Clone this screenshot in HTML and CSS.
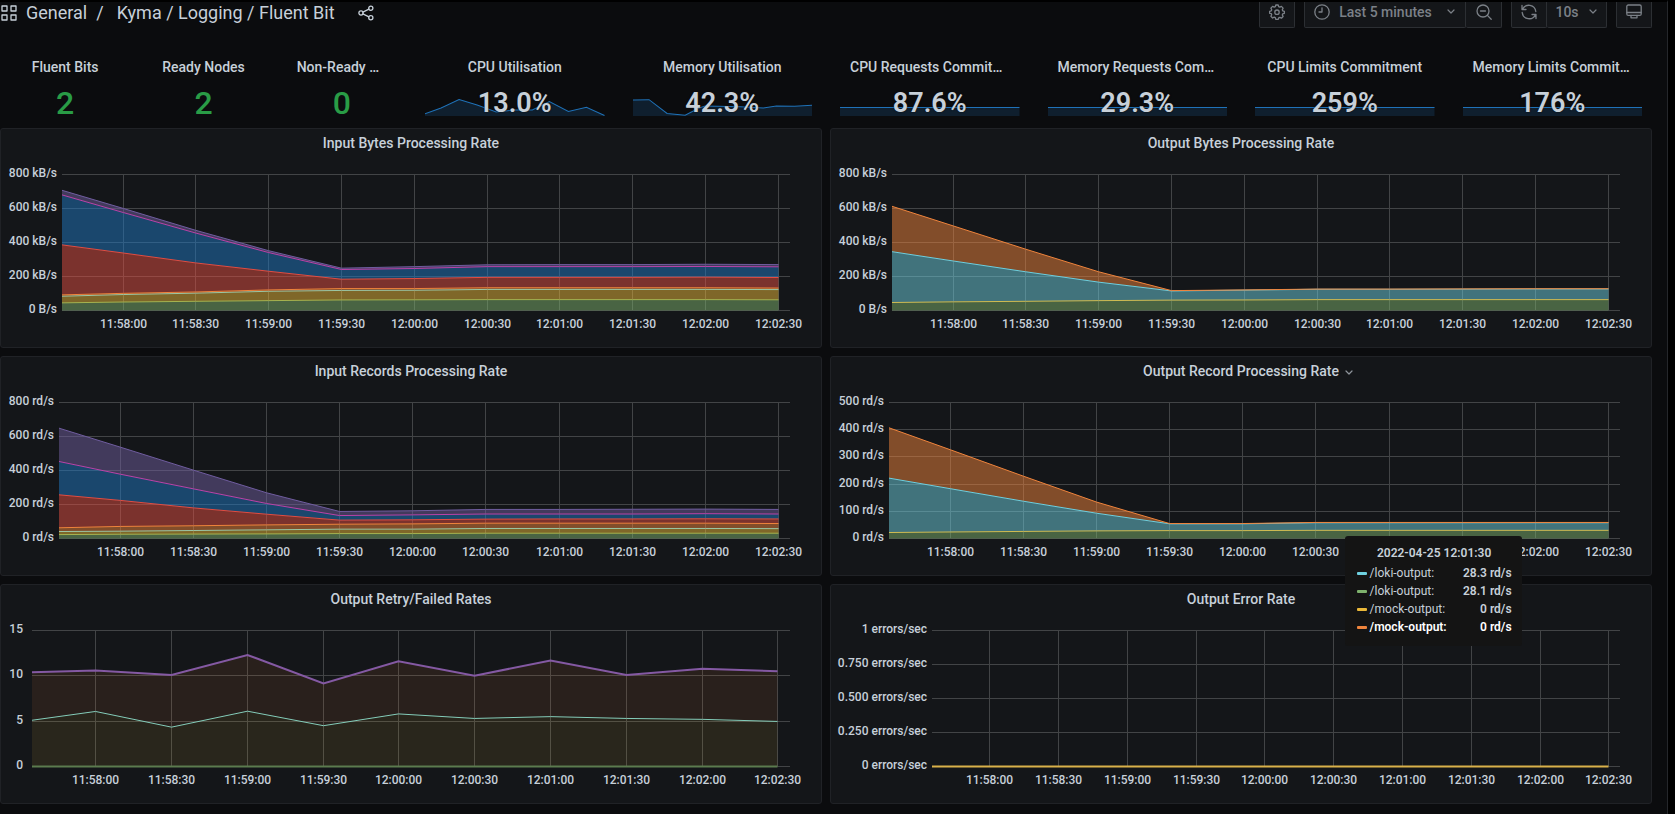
FILE: index.html
```html
<!DOCTYPE html>
<html lang="en">
<head>
<meta charset="utf-8">
<title>Kyma / Logging / Fluent Bit</title>
<link rel="stylesheet" href="styles.css">
</head>
<body>
<div class="app">
  <header class="topbar">
    <nav class="crumbs" aria-label="Breadcrumb">
      <svg class="icon" viewBox="0 0 16 16" aria-hidden="true"><path d="M1 1h5v5H1zM10 1h5v5h-5zM1 10h5v5H1zM10 10h5v5h-5z"/></svg>
      <a class="folder" href="#general">General</a>
      <span class="slash">/</span>
      <a class="board" href="#board">Kyma / Logging / Fluent Bit</a>
      <button class="share" type="button" aria-label="Share dashboard"><svg class="icon" viewBox="0 0 16 16" aria-hidden="true"><circle cx="3" cy="8" r="2.1"/><circle cx="12.8" cy="3.2" r="2.1"/><circle cx="12.8" cy="12.8" r="2.1"/><path d="M4.9 7.1l6-3M4.9 8.9l6 3"/></svg></button>
    </nav>
    <div class="tools">
      <button class="tool" type="button" aria-label="Dashboard settings"><svg class="icon" viewBox="0 0 16 16" aria-hidden="true"><path d="M6.8 1h2.4l.5 1.7 1.1.5 1.6-.8 1.7 1.7-.8 1.6.4 1.1 1.7.5v2l-1.7.5-.4 1.1.8 1.6-1.7 1.7-1.6-.8-1.1.5L9.200 15.400H6.800l-.5-1.700-1.100-.5-1.600.8-1.700-1.700.8-1.600-.4-1.100L.6 9.300v-2l1.700-.5.4-1.100-.8-1.600 1.700-1.700 1.600.8 1.100-.5z"/><circle cx="8" cy="8.200" r="2.200"/></svg></button>
      <div class="group">
        <button class="tool range" type="button"><svg class="icon" viewBox="0 0 16 16" aria-hidden="true"><circle cx="8" cy="8" r="7.200"/><path d="M8 3.800V8H5"/></svg><span>Last 5 minutes</span><svg class="caret" viewBox="0 0 10 6" aria-hidden="true"><path d="M2 1l3 3 3-3"/></svg></button>
        <button class="tool" type="button" aria-label="Zoom out"><svg class="icon" viewBox="0 0 16 16" aria-hidden="true"><circle cx="7" cy="7" r="6"/><path d="M11.400 11.400l3.800 3.800M4.500 7h5"/></svg></button>
      </div>
      <div class="group">
        <button class="tool" type="button" aria-label="Refresh"><svg class="icon" viewBox="0 0 16 16" aria-hidden="true"><path d="M1 1.500v4h4M1.500 5.300A7 7 0 0 1 14.800 7.500M15 14.500v-4h-4M14.500 10.700A7 7 0 0 1 1.200 8.500"/></svg></button>
        <button class="tool interval" type="button"><span>10s</span><svg class="caret" viewBox="0 0 10 6" aria-hidden="true"><path d="M2 1l3 3 3-3"/></svg></button>
      </div>
      <button class="tool" type="button" aria-label="Cycle view mode"><svg class="icon" viewBox="0 0 16 16" aria-hidden="true"><rect x=".8" y="1" width="14.400" height="10.400" rx="1.500"/><path d="M1 8.500h14M5 11.500v2.300h6v-2.300"/></svg></button>
    </div>
  </header>

  <main class="dashboard">
    <section class="stat"><h2 class="title">Fluent Bits</h2><div class="body"><span class="count">2</span></div></section>
    <section class="stat"><h2 class="title">Ready Nodes</h2><div class="body"><span class="count">2</span></div></section>
    <section class="stat"><h2 class="title">Non-Ready Nodes</h2><div class="body"><span class="count">0</span></div></section>

    <section class="stat wide"><h2 class="title">CPU Utilisation</h2><div class="body">
      <svg class="spark" viewBox="0 0 179 17" preserveAspectRatio="none" aria-hidden="true"><path class="area" d="M0 14.700L16 9 34 .5 52 6 71 13 90 11h17l17-8.500 19 10L161 8.300l18 8.200V17H0z"/><path class="line" d="M0 14.700L16 9 34 .5 52 6 71 13 90 11h17l17-8.500 19 10L161 8.300l18 8.200"/></svg>
      <span class="value">13.0%</span></div></section>
    <section class="stat wide"><h2 class="title">Memory Utilisation</h2><div class="body">
      <svg class="spark" viewBox="0 0 179 17" preserveAspectRatio="none" aria-hidden="true"><path class="area" d="M0 1L16 .7 34 14.500l18 1.800L66 9l6-2 35 .7L130 9l13-2 18 .2 18-.9V17H0z"/><path class="line" d="M0 1L16 .7 34 14.500l18 1.800L66 9l6-2 35 .7L130 9l13-2 18 .2 18-.9"/></svg>
      <span class="value">42.3%</span></div></section>
    <section class="stat wide"><h2 class="title">CPU Requests Commitment</h2><div class="body">
      <svg class="spark" viewBox="0 0 179 17" preserveAspectRatio="none" aria-hidden="true"><path class="area" d="M0 8.500h179V17H0z"/><path class="line" d="M0 8.500h179"/></svg>
      <span class="value">87.6%</span></div></section>
    <section class="stat wide"><h2 class="title">Memory Requests Commitment</h2><div class="body">
      <svg class="spark" viewBox="0 0 179 17" preserveAspectRatio="none" aria-hidden="true"><path class="area" d="M0 8.500h179V17H0z"/><path class="line" d="M0 8.500h179"/></svg>
      <span class="value">29.3%</span></div></section>
    <section class="stat wide"><h2 class="title">CPU Limits Commitment</h2><div class="body">
      <svg class="spark" viewBox="0 0 179 17" preserveAspectRatio="none" aria-hidden="true"><path class="area" d="M0 8.500h179V17H0z"/><path class="line" d="M0 8.500h179"/></svg>
      <span class="value">259%</span></div></section>
    <section class="stat wide"><h2 class="title">Memory Limits Commitment</h2><div class="body">
      <svg class="spark" viewBox="0 0 179 17" preserveAspectRatio="none" aria-hidden="true"><path class="area" d="M0 8.500h179V17H0z"/><path class="line" d="M0 8.500h179"/></svg>
      <span class="value">176%</span></div></section>

    <section class="panel"><h2 class="title">Input Bytes Processing Rate</h2><svg class="chart" id="input-bytes"></svg></section>
    <section class="panel"><h2 class="title">Output Bytes Processing Rate</h2><svg class="chart" id="output-bytes"></svg></section>
    <section class="panel"><h2 class="title">Input Records Processing Rate</h2><svg class="chart" id="input-records"></svg></section>
    <section class="panel">
      <h2 class="title"><span class="hovered">Output Record Processing Rate<svg class="caret" viewBox="0 0 10 6" aria-hidden="true"><path d="M2 1l3 3 3-3"/></svg></span></h2>
      <svg class="chart" id="output-records"></svg>
      <div class="tooltip" role="tooltip">
        <div class="time">2022-04-25 12:01:30</div>
        <div class="row"><i class="key teal"></i><span>/loki-output:</span><b>28.3 rd/s</b></div>
        <div class="row"><i class="key green"></i><span>/loki-output:</span><b>28.1 rd/s</b></div>
        <div class="row"><i class="key yellow"></i><span>/mock-output:</span><b>0 rd/s</b></div>
        <div class="row active"><i class="key orange"></i><span>/mock-output:</span><b>0 rd/s</b></div>
      </div>
    </section>
    <section class="panel"><h2 class="title">Output Retry/Failed Rates</h2><svg class="chart" id="output-retry"></svg></section>
    <section class="panel"><h2 class="title">Output Error Rate</h2><svg class="chart" id="output-error"></svg></section>
  </main>
</div>
<script src="charts.js"></script>
</body>
</html>
```
FILE: styles.css
```css
* { box-sizing: border-box; }

body {
  margin: 0;
  background: #000;
  color: #c7d0d9;
  font: 500 14px/20px Roboto, "Liberation Sans", sans-serif;
}

.app {
  min-height: 100vh;
  margin-right: 7px;
  padding-right: 15px;
  border-top: 2px solid #000;
  border-right: 1px solid #25272b;
  background: #0b0c0e;
}

button {
  padding: 0;
  border: 0;
  background: none;
  color: inherit;
  font: inherit;
}

a { color: inherit; text-decoration: none; }

.icon {
  display: block;
  width: 16px;
  height: 16px;
  fill: none;
  stroke: currentColor;
  stroke-width: 1.3;
  stroke-linejoin: round;
  stroke-linecap: round;
}

.caret {
  width: 10px;
  height: 6px;
  fill: none;
  stroke: currentColor;
  stroke-width: 1.2;
  stroke-linecap: round;
  stroke-linejoin: round;
}

/* Top bar */
.topbar {
  display: flex;
  justify-content: space-between;
  height: 26px;
}

.crumbs {
  display: flex;
  align-items: center;
  height: 22px;
  padding-left: 1px;
  font-size: 18px;
  font-weight: 400;
}

.folder { margin-left: 9px; }
.slash { margin: 0 13px 0 9px; }
.share { margin-left: 23px; }

.tools {
  display: flex;
  gap: 9px;
  color: #7b8087;
}

.group { display: flex; }
.group .tool + .tool { border-left: 0; }

.tool {
  display: flex;
  align-items: center;
  justify-content: center;
  gap: 9px;
  width: 36px;
  height: 26px;
  padding-bottom: 5px;
  border: 1px solid #2c2f33;
  border-top: 0;
  border-radius: 0 0 2px 2px;
  background: #141619;
}

.range { width: 162px; }
.range .caret { margin-left: 5px; }
.interval { width: 60px; }

/* Dashboard grid */
.dashboard {
  display: grid;
  grid-template-columns: repeat(24, minmax(0, 1fr));
  gap: 8px;
  padding: 24px 0 10px;
}

.title {
  height: 30px;
  margin: 0;
  padding: 4px 20px 0;
  font-size: 14px;
  font-weight: 500;
  line-height: 20px;
  text-align: center;
  white-space: nowrap;
}

.stat { grid-column: span 2; }
.stat.wide { grid-column: span 3; }
.stat .title {
  padding-top: 5px;
  overflow: hidden;
  text-overflow: ellipsis;
}

.body {
  position: relative;
  display: flex;
  align-items: center;
  justify-content: center;
  height: 38px;
}

.count {
  padding-top: 3px;
  color: #299c46;
  font-size: 32px;
  line-height: 38px;
}

.value {
  position: relative;
  padding-top: 3px;
  font-size: 27px;
  font-weight: 600;
  line-height: 38px;
  text-shadow: 0 0 2px #0b0c0e;
}

.spark {
  position: absolute;
  right: 10px;
  bottom: 4px;
  left: 10px;
  width: calc(100% - 20px);
  height: 17px;
}

.area { fill: #0f1f2e; }
.line { fill: none; stroke: #1f72b8; stroke-width: 1; }

.panel {
  position: relative;
  grid-column: span 12;
  border: 1px solid #202226;
  border-radius: 3px;
  background: #141619;
}

.hovered { position: relative; }
.hovered .caret {
  position: absolute;
  top: 7px;
  left: calc(100% + 5px);
  color: #8e949b;
}

/* Charts */
.chart {
  display: block;
  width: 100%;
  height: 188px;
}

.grid-line { stroke: #424446; stroke-width: 1; }
.chart text { fill: #c7d0d9; font-size: 12px; font-weight: 500; }
.y-label { text-anchor: end; }
.x-label { text-anchor: middle; }
.series { fill: none; stroke-width: 1; }

/* Tooltip */
.tooltip {
  position: absolute;
  z-index: 1;
  top: 179px;
  left: calc(63% - 3px);
  width: 177px;
  padding: 7px 10px 10px 12px;
  border-radius: 3px;
  background: #141414;
  font-size: 12px;
  font-weight: 400;
  line-height: 18px;
}

.time {
  margin-bottom: 1px;
  font-weight: 600;
  line-height: 20px;
  text-align: center;
}

.row { display: flex; align-items: center; gap: 3px; }
.row b { margin-left: auto; font-weight: 600; }
.active { color: #fff; font-weight: 600; }
.key { width: 10px; height: 3px; border-radius: 1px; }
.teal { background: #6ed0e0; }
.green { background: #7eb26d; }
.yellow { background: #eab839; }
.orange { background: #ef843c; }
```
FILE: charts.js
```js
const TIMES = ["11:58:00", "11:58:30", "11:59:00", "11:59:30", "12:00:00",
  "12:00:30", "12:01:00", "12:01:30", "12:02:00", "12:02:30"];
const FIRST_TICK = 0.084;
const TICK_STEP = 0.1;
const TOP = 15;
const HEIGHT = 136;
const RIGHT = 31;

const C = {
  green: "#7EB26D", yellow: "#EAB839", teal: "#6ED0E0", orange: "#EF843C",
  red: "#E24D42", blue: "#1F78C1", magenta: "#BA43A9", violet: "#705DA0",
  lime: "#A6B350", mint: "#9CC7A4", purple: "#8459A3"
};

// Each band is stacked: its own top edge, the stroke on it, and the fill below.
const CHARTS = {
  "input-bytes": {
    left: 61, max: 800, labels: ["0 B/s", "200 kB/s", "400 kB/s", "600 kB/s", "800 kB/s"],
    bands: [
      { line: C.lime, fill: C.green, data: [45, 50, 54, 58, 62, 63, 64, 64, 64, 64, 63] },
      { line: C.mint, fill: C.yellow, data: [84, 94, 102, 113, 118, 119, 124, 124, 124, 124, 123] },
      { line: C.orange, fill: C.orange, data: [92, 101, 109, 121, 129, 129, 134, 134, 134, 134, 132] },
      { line: C.red, fill: C.red, data: [386, 338, 280, 231, 184, 188, 195, 195, 195, 196, 194] },
      { line: C.magenta, fill: C.blue, data: [680, 576, 456, 341, 241, 247, 258, 258, 258, 259, 257] },
      { line: C.violet, fill: C.violet, data: [707, 600, 472, 352, 249, 258, 269, 270, 270, 272, 270] }
    ]
  },
  "output-bytes": {
    left: 61, max: 800, labels: ["0 B/s", "200 kB/s", "400 kB/s", "600 kB/s", "800 kB/s"],
    bands: [
      { line: "#D0BC52", fill: C.green, data: [47, 51, 54, 58, 61, 62, 64, 64, 64, 64, 64] },
      { line: C.teal, fill: C.teal, data: [346, 291, 228, 167, 115, 120, 125, 125, 126, 127, 127] },
      { line: C.orange, fill: C.orange, data: [613, 497, 361, 228, 117, 121, 126, 126, 127, 128, 128] }
    ]
  },
  "input-records": {
    left: 58, max: 800, labels: ["0 rd/s", "200 rd/s", "400 rd/s", "600 rd/s", "800 rd/s"],
    bands: [
      { line: C.lime, fill: C.green, data: [23, 25, 26, 27, 29, 29, 31, 31, 31, 31, 31] },
      { line: C.mint, fill: C.yellow, data: [41, 43, 47, 51, 55, 55, 59, 59, 59, 59, 58] },
      { line: C.orange, fill: C.orange, data: [63, 71, 75, 80, 84, 86, 90, 90, 90, 90, 88] },
      { line: C.red, fill: C.red, data: [257, 224, 180, 143, 108, 110, 114, 115, 115, 116, 115] },
      { line: C.magenta, fill: C.blue, data: [453, 378, 292, 206, 135, 139, 144, 144, 144, 146, 144] },
      { line: C.violet, fill: C.violet, data: [649, 537, 402, 269, 159, 163, 171, 171, 172, 173, 171] }
    ]
  },
  "output-records": {
    left: 58, max: 500, labels: ["0 rd/s", "100 rd/s", "200 rd/s", "300 rd/s", "400 rd/s", "500 rd/s"],
    bands: [
      { line: "#D0BC52", fill: C.green, data: [22, 24, 26, 28, 29, 29, 30, 30, 30, 30, 30] },
      { line: C.teal, fill: C.teal, data: [222, 183, 137, 93, 54, 54, 58, 58, 58, 58, 58] },
      { line: C.orange, fill: C.orange, data: [407, 326, 229, 134, 55, 55, 59, 59, 59, 59, 59] }
    ]
  },
  "output-retry": {
    left: 31, max: 15, labels: ["0", "5", "10", "15"], opacity: 0.1, labelGap: 9,
    bands: [
      { line: "#5B7B4E", fill: C.green, width: 2, data: [0, 0, 0, 0, 0, 0, 0, 0, 0, 0, 0] },
      { line: "#84CDBA", fill: C.yellow, data: [5.1, 6.07, 4.34, 6.1, 4.5, 5.8, 5.3, 5.5, 5.3, 5.2, 4.97] },
      { line: C.purple, fill: C.orange, width: 2, data: [10.4, 10.6, 10.1, 12.3, 9.15, 11.6, 10, 11.7, 10.1, 10.77, 10.5] }
    ]
  },
  "output-error": {
    left: 101, max: 1, labels: ["0 errors/sec", "0.250 errors/sec", "0.500 errors/sec", "0.750 errors/sec", "1 errors/sec"],
    bands: [
      { line: "#D9B14A", fill: C.yellow, width: 2, data: [0, 0, 0, 0, 0, 0, 0, 0, 0, 0, 0] }
    ]
  }
};

const edge = n => Math.round(n) + 0.5;

function draw(id) {
  const chart = CHARTS[id];
  const svg = document.getElementById(id);
  const right = svg.clientWidth - RIGHT;
  const width = right - chart.left;
  const tickX = i => edge(chart.left + width * (FIRST_TICK + TICK_STEP * i) - 0.5);
  const y = v => TOP + 0.5 + HEIGHT * (1 - v / chart.max);
  const steps = chart.labels.length - 1;
  let out = "";

  chart.labels.forEach((label, i) => {
    const ly = edge(TOP + HEIGHT * (1 - i / steps));
    out += `<line class="grid-line" x1="${chart.left}" x2="${right}" y1="${ly}" y2="${ly}"/>`;
    out += `<text class="y-label" x="${chart.left - (chart.labelGap || 5)}" y="${ly + 2.5}">${label}</text>`;
  });
  TIMES.forEach((label, i) => {
    const lx = tickX(i);
    out += `<line class="grid-line" x1="${lx}" x2="${lx}" y1="${TOP}" y2="${TOP + HEIGHT}"/>`;
    out += `<text class="x-label" x="${lx}" y="${TOP + HEIGHT + 18}">${label}</text>`;
  });

  const points = data => data.map((v, i) => [i ? tickX(i - 1) : chart.left, y(v)]);
  let floor = points(TIMES.map(() => 0).concat(0));
  let lines = "";
  chart.bands.forEach(band => {
    const top = points(band.data);
    const area = top.concat(floor.slice().reverse()).join(" ");
    out += `<polygon points="${area}" fill="${band.fill}" fill-opacity="${chart.opacity || 0.5}"/>`;
    lines += `<polyline class="series" points="${top.join(" ")}" style="stroke:${band.line};stroke-width:${band.width || 1}"/>`;
    floor = top;
  });
  svg.innerHTML = out + lines;
}

const drawAll = () => Object.keys(CHARTS).forEach(draw);
drawAll();
window.addEventListener("resize", drawAll);
```
